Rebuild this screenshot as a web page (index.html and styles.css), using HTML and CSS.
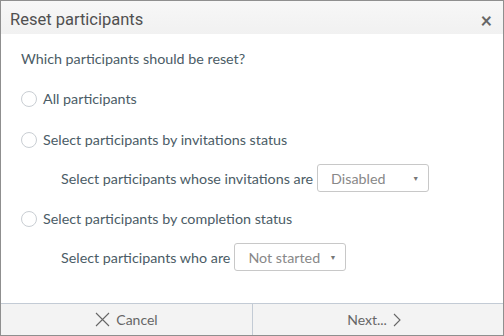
FILE: index.html
```html
<!DOCTYPE html>
<html lang="en">
<head>
  <title>Reset participants</title>
  <link rel="stylesheet" href="styles.css">
</head>
<body>
  <div class="dialog">
    <div class="dialog-header">
      <span class="dialog-title">Reset participants</span>
      <span class="dialog-close">&times;</span>
    </div>
    <div class="dialog-body">
      <p class="question">Which participants should be reset?</p>
      <label class="radio-row first"><span class="radio"></span>All participants</label>
      <label class="radio-row"><span class="radio"></span>Select participants by invitations status</label>
      <div class="sub-row">
        <span>Select participants whose invitations are</span>
        <div class="select"><span>Disabled</span><span class="arrow">&#9660;</span></div>
      </div>
      <label class="radio-row after-sub"><span class="radio"></span>Select participants by completion status</label>
      <div class="sub-row">
        <span>Select participants who are</span>
        <div class="select"><span>Not started</span><span class="arrow">&#9660;</span></div>
      </div>
    </div>
    <div class="dialog-footer">
      <button type="button" class="footer-btn">
        <svg width="15" height="15" viewBox="0 0 15 15"><path d="M1 1L14 14M14 1L1 14" stroke="#666" stroke-width="1.1" fill="none"/></svg>
        Cancel
      </button>
      <button type="button" class="footer-btn next">
        Next...
        <svg width="8" height="14" viewBox="0 0 8 14"><path d="M1 1L7 7L1 13" stroke="#666" stroke-width="1.1" fill="none"/></svg>
      </button>
    </div>
  </div>
</body>
</html>
```

FILE: styles.css
```css
html, body {
  margin: 0;
  height: 100%;
  background: #fff;
}
body {
  font-family: Lato, "Open Sans", sans-serif;
  color: #4b5c66;
}
.dialog {
  box-sizing: border-box;
  width: 504px;
  height: 336px;
  border: 1px solid #8f8f8f;
  display: flex;
  flex-direction: column;
}
.dialog-header {
  box-sizing: border-box;
  height: 33px;
  flex: none;
  background: linear-gradient(#f7f7f7, #f1f1f1);
  display: flex;
  align-items: center;
  justify-content: space-between;
  padding: 4px 11px 0 9px;
}
.dialog-title {
  font-family: Roboto, sans-serif;
  font-size: 16.5px;
  color: #505050;
}
.dialog-close {
  font-size: 20px;
  font-weight: bold;
  color: #666;
  line-height: 1;
}
.dialog-body {
  flex: 1;
  padding: 0 20px;
}
.question {
  font-size: 14.3px;
  margin: 16px 0 0;
  line-height: 17px;
}
.radio-row {
  display: flex;
  align-items: center;
  font-size: 14.3px;
  margin-top: 24px;
  line-height: 17px;
}
.radio-row.first {
  margin-top: 23px;
}
.radio-row.after-sub {
  margin-top: 18px;
}
.radio {
  box-sizing: border-box;
  width: 16px;
  height: 16px;
  border: 1px solid #c9ced3;
  border-radius: 50%;
  margin-right: 6px;
  flex: none;
}
.sub-row {
  display: flex;
  align-items: center;
  font-size: 14.3px;
  margin-top: 16px;
  padding-left: 40px;
}
.select {
  box-sizing: border-box;
  width: 112px;
  height: 28px;
  margin-left: 4px;
  border: 1px solid #c8c8c8;
  border-radius: 3px;
  display: flex;
  align-items: center;
  justify-content: space-between;
  padding: 0 9px 0 13px;
  color: #888;
  font-size: 14.3px;
}
.arrow {
  font-size: 7px;
  color: #777;
}
.dialog-footer {
  flex: none;
  height: 31px;
  border-top: 1px solid #c3cbd5;
  background: #f3f3f3;
  display: grid;
  grid-template-columns: 1fr 1fr;
}
.footer-btn {
  border: none;
  background: none;
  font-family: inherit;
  font-size: 14px;
  color: #666;
  display: flex;
  align-items: center;
  justify-content: center;
  gap: 6px;
  padding: 0;
}
.footer-btn + .footer-btn {
  border-left: 1px solid #c3cbd5;
}
.footer-btn.next {
  padding-right: 8px;
}
```
